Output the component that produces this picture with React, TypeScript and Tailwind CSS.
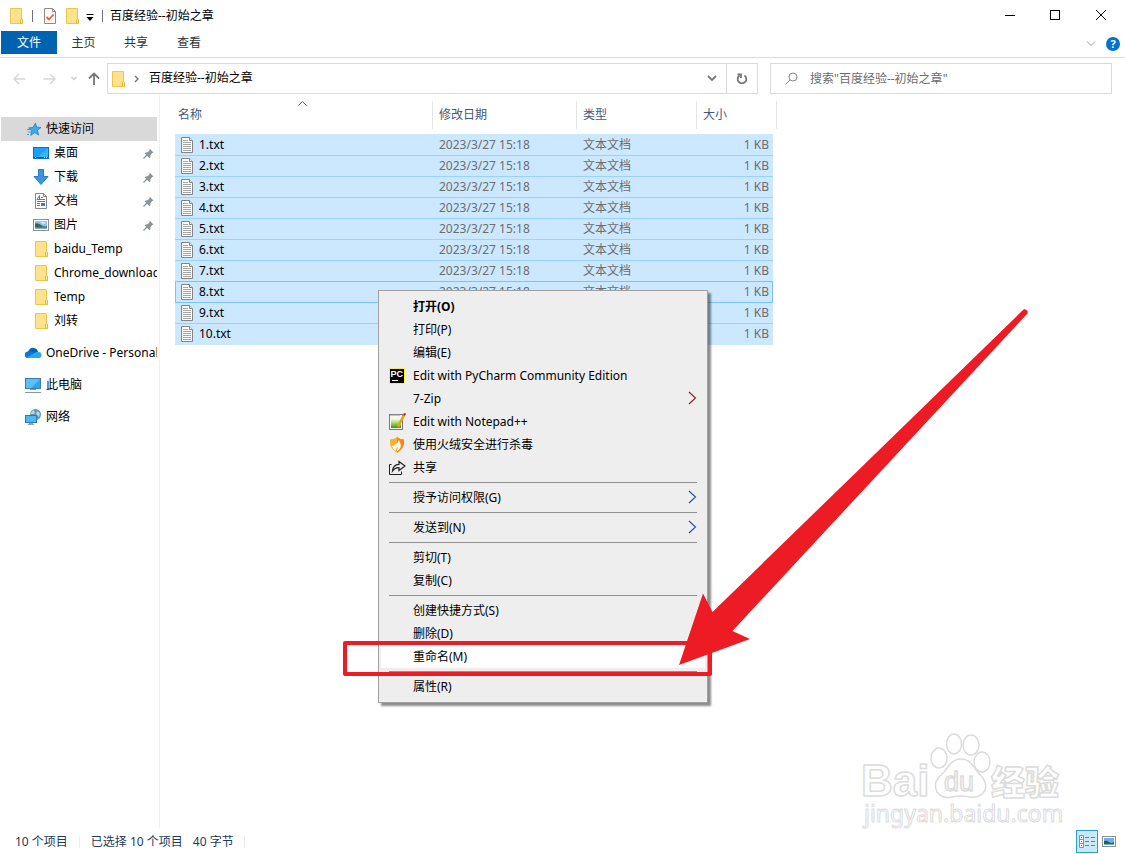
import React, { useState } from 'react';
import clsx from 'clsx';

const FolderIcon = () => (
  <svg width="16" height="16" viewBox="0 0 16 16">
    <path d="M2.5 0.5h11v15h-11z" fill="#ffe38c" stroke="#eec64d" />
    <path d="M12.5 15.5v-4q1-1.5 2 0v4z" fill="#ffe9a6" stroke="#e6b832" />
  </svg>
);

const TextFileIcon = () => (
  <svg width="16" height="16" viewBox="0 0 16 16">
    <path d="M2.5 0.5h8l3 3v12h-11z" fill="#fff" stroke="#848484" />
    <path d="M10.5 0.5v3h3" fill="#eee" stroke="#848484" />
    <path d="M4 3.5h5M4 5.5h8M4 7.5h8M4 9.5h8M4 11.5h8M4 13.5h8" stroke="#a6a6a6" />
  </svg>
);

const StarIcon = () => (
  <svg width="16" height="16" viewBox="0 0 16 16">
    <path d="M9.500 2l1 4 4.500 0.500-3.600 2.700 1.300 4.800-4-2.400-4 2.800 1.200-4.700-3.200-2.700 4.300-0.600z" fill="#3fa9ea" stroke="#1f83c9" strokeWidth="0.8" />
    <path d="M1 8.5h3M2 11h3M1 13.5h2" stroke="#3f9fdc" />
  </svg>
);

const DesktopIcon = () => (
  <svg width="16" height="16" viewBox="0 0 16 16">
    <rect x="0.5" y="2.5" width="15" height="11" fill="#1ba1f9" stroke="#0a70c4" />
    <path d="M15 3L5 12h10z" fill="#3db2ff" />
    <path d="M1 12.5h14" stroke="#0c5c9e" />
    <path d="M2 12.5h1M11 12.5h1M13 12.5h1" stroke="#fff" />
  </svg>
);

const DownloadIcon = () => (
  <svg width="16" height="16" viewBox="0 0 16 16">
    <path d="M5.5 0.5h5v7h4.5l-7 8-7-8h4.5z" fill="#3c93e0" stroke="#2a7bc8" />
  </svg>
);

const DocumentIcon = () => (
  <svg width="16" height="16" viewBox="0 0 16 16">
    <path d="M2.5 0.5h8l3 3v12h-11z" fill="#fff" stroke="#868686" />
    <path d="M10.5 0.5v3h3" fill="none" stroke="#868686" />
    <path d="M4 6.5l2.5-4v4M8 4.5h2M4 6.5h8M4 8.5h8M4 10.5h3M4 12.5h3" fill="none" stroke="#1d8fd8" />
    <rect x="8" y="10" width="4" height="3" fill="#3f7fa8" />
  </svg>
);

const PictureIcon = () => (
  <svg width="16" height="16" viewBox="0 0 16 16">
    <rect x="0.5" y="2.5" width="15" height="11" fill="#fff" stroke="#8f8f8f" />
    <rect x="2" y="4" width="12" height="8" fill="#8fc3ef" />
    <path d="M2 6.5q3-1 6 1.500t6 1v2.500h-12z" fill="#3b6459" />
    <path d="M2 10.500h12v1.500h-12z" fill="#7fa9bd" />
    <path d="M7 5q4-1 6 1l-3 1z" fill="#d7eafa" />
  </svg>
);

const OneDriveIcon = () => (
  <svg width="17" height="16" viewBox="0 0 17 16">
    <path d="M4 5a5 5 0 0 1 9 2l-5 4-6-3z" fill="#0364b8" />
    <path d="M3 13a3.3 3.3 0 0 1 0-6.600q3-0.800 5.5 1.200l5 5.400z" fill="#0f78d4" />
    <path d="M2 12.600l6.5-4q1.800-2 4.5-1.400a3 3 0 0 1 1.500 5.800h-11.500z" fill="#28a8ea" />
  </svg>
);

const ComputerIcon = () => (
  <svg width="16" height="16" viewBox="0 0 16 16">
    <rect x="0.5" y="1.5" width="15" height="10" fill="#5bc0f8" stroke="#3f7ca5" />
    <path d="M15 2l-9 9h9z" fill="#2fa4f1" />
    <path d="M5 12.5h6M0 15.5h16" stroke="#8196a6" />
  </svg>
);

const NetworkIcon = () => (
  <svg width="16" height="16" viewBox="0 0 16 16">
    <circle cx="10.5" cy="5.5" r="5.5" fill="#5f97b3" />
    <path d="M8 1q3 2 1 4l-4 0zM12 2l3 2-1 4-3-3z" fill="#b9d5df" />
    <rect x="0.5" y="6.5" width="11" height="7" fill="#4db8f5" stroke="#2f79a8" />
    <path d="M4 14.5h4M3 15.5h6" stroke="#8ba5b5" />
  </svg>
);

const PinIcon = () => (
  <svg width="11" height="11" viewBox="0 0 11 11">
    <path d="M6.5 0.500l4 4-1.200 0.500-1.800 2-0.200 2.300-1.100 0.700-4.500-4.500 0.800-1 2.300-0.200 1.700-2z" fill="#8a949b" />
    <path d="M4 7L0.500 10.500" stroke="#8a949b" strokeWidth="1.200" />
  </svg>
);

const PropertiesIcon = () => (
  <svg width="14" height="16" viewBox="0 0 14 16">
    <path d="M1.5 0.5h8l3 3v12h-11z" fill="#fafafa" stroke="#8b8b8b" />
    <path d="M9.5 0.5v3h3" fill="none" stroke="#8b8b8b" />
    <path d="M3.500 9l2.500 2.500 4.500-5" fill="none" stroke="#e8642a" strokeWidth="1.800" />
  </svg>
);

const PyCharmIcon = () => (
  <svg width="16" height="16" viewBox="0 0 16 16">
    <rect x="0.5" y="0.5" width="15" height="15" fill="#000" stroke="#f7f13c" />
    <text x="1.500" y="9" fill="#fff" fontSize="9" fontWeight="700" fontFamily="Liberation Sans">PC</text>
    <path d="M3 12.5h6" stroke="#fff" />
  </svg>
);

const NotepadIcon = () => (
  <svg width="17" height="17" viewBox="0 0 17 17">
    <defs>
      <linearGradient id="note" x1="0" y1="0" x2="0" y2="1">
        <stop offset="0.1" stopColor="#f4f6ea" />
        <stop offset="0.5" stopColor="#a8d95a" />
        <stop offset="1" stopColor="#2f9a14" />
      </linearGradient>
    </defs>
    <rect x="0.5" y="1.5" width="13" height="15" fill="#f8f8f8" stroke="#77797d" />
    <path d="M2 5h10v10h-10z" fill="url(#note)" />
    <path d="M2 1v2M4 1v2M6 1v2M8 1v2M10 1v2" stroke="#8d9199" />
    <path d="M15 2l-4.500 9-1.500 3" stroke="#e6a31d" strokeWidth="2.600" />
    <path d="M14 1l2-1 1 1-1.500 2z" fill="#a3151a" />
  </svg>
);

const HuorongIcon = () => (
  <svg width="16" height="16" viewBox="0 0 16 16">
    <path d="M1 2.500q4 0 7-2.500 3 2.500 7 2.500 1 9-7 13.500-8-4.500-7-13.500z" fill="#fbb02c" />
    <path d="M8 0q3 2.500 7 2.500 1 9-7 13.500z" fill="#f78a12" />
    <path d="M10 3q2.500 5 1.500 7.500-1 2.500-4 4 1.500-2 1-4.500-1.500 1-2 4-3-2-3.500-5 1.500 0 3-1.500 3-1.500 4-4.500z" fill="#fff8ec" />
  </svg>
);

const ShareIcon = () => (
  <svg width="17" height="16" viewBox="0 0 17 16" fill="none" stroke="#222">
    <path d="M2.500 4.5h-2v10h12v-3" />
    <path d="M10 1.5l6 4.5-6 4.5v-2.800q-4-0.200-6.500 3.300 0.500-6.500 6.500-6.700z" strokeWidth="1.200" />
  </svg>
);

const ChevronIcon = ({ color }: { color: string }) => (
  <svg className="mb-[2px]" width="9" height="14" viewBox="0 0 9 14" fill="none" stroke={color} strokeWidth="1.100">
    <path d="M1 1l6.5 6-6.500 6" />
  </svg>
);

const quickItems = [
  { label: '桌面', icon: DesktopIcon, pinned: true },
  { label: '下载', icon: DownloadIcon, pinned: true },
  { label: '文档', icon: DocumentIcon, pinned: true },
  { label: '图片', icon: PictureIcon, pinned: true },
  { label: 'baidu_Temp', icon: FolderIcon },
  { label: 'Chrome_download', icon: FolderIcon },
  { label: 'Temp', icon: FolderIcon },
  { label: '刘转', icon: FolderIcon },
];

const rootItems = [
  { label: 'OneDrive - Personal', icon: OneDriveIcon },
  { label: '此电脑', icon: ComputerIcon },
  { label: '网络', icon: NetworkIcon },
];

const files = ['1.txt', '2.txt', '3.txt', '4.txt', '5.txt', '6.txt', '7.txt', '8.txt', '9.txt', '10.txt'];

type MenuEntry = { label: string; icon?: React.ComponentType; arrow?: string; bold?: boolean; active?: boolean };

const menuGroups: MenuEntry[][] = [
  [
    { label: '打开(O)', bold: true },
    { label: '打印(P)' },
    { label: '编辑(E)' },
    { label: 'Edit with PyCharm Community Edition', icon: PyCharmIcon },
    { label: '7-Zip', arrow: '#8c1c24' },
    { label: 'Edit with Notepad++', icon: NotepadIcon },
    { label: '使用火绒安全进行杀毒', icon: HuorongIcon },
    { label: '共享', icon: ShareIcon },
  ],
  [{ label: '授予访问权限(G)', arrow: '#1f5590' }],
  [{ label: '发送到(N)', arrow: '#1f5590' }],
  [{ label: '剪切(T)' }, { label: '复制(C)' }],
  [{ label: '创建快捷方式(S)' }, { label: '删除(D)' }, { label: '重命名(M)', active: true }],
  [{ label: '属性(R)' }],
];

const TitleBar = () => (
  <header className="flex h-[31px] items-center justify-between">
    <div className="flex items-center pl-2">
      <FolderIcon />
      <span className="ml-2 h-3 w-px bg-gray-500" />
      <button className="ml-[10px]" aria-label="属性"><PropertiesIcon /></button>
      <button className="ml-[7px]" aria-label="新建文件夹"><FolderIcon /></button>
      <button className="ml-[6px] mt-1" aria-label="自定义快速访问工具栏">
        <svg width="8" height="7" viewBox="0 0 8 7"><path d="M0.5 0.5h7" stroke="#000" /><path d="M0.5 3h7l-3.500 4z" /></svg>
      </button>
      <span className="ml-2 h-3 w-px bg-gray-500" />
      <h1 className="ml-[7px]">百度经验--初始之章</h1>
    </div>
    <div className="flex h-[30px] self-start pr-px">
      <button className="flex w-[45px] items-center justify-center" aria-label="最小化">
        <svg width="10" height="10"><path d="M0 5.5h10" stroke="#000" /></svg>
      </button>
      <button className="flex w-[45px] items-center justify-center" aria-label="最大化">
        <svg width="10" height="10"><rect x="0.5" y="0.5" width="9" height="9" fill="none" stroke="#000" /></svg>
      </button>
      <button className="flex w-[47px] items-center justify-center" aria-label="关闭">
        <svg width="10" height="10"><path d="M0 0l10 10M10 0L0 10" stroke="#000" /></svg>
      </button>
    </div>
  </header>
);

const Ribbon = () => (
  <nav className="flex h-[27px] items-start justify-between border-b border-[#dadbdc]">
    <div className="flex h-[23px] pl-px text-[#333]">
      <button className="w-14 bg-[#0063b1] pt-px text-white">文件</button>
      <button className="w-[53px] pt-px">主页</button>
      <button className="w-[52px] pt-px">共享</button>
      <button className="w-[54px] pt-px">查看</button>
    </div>
    <div className="flex h-[26px] items-center gap-[10px] pr-[5px]">
      <button aria-label="展开功能区">
        <svg width="10" height="6" viewBox="0 0 10 6" fill="none" stroke="#999"><path d="M1 0.5l4 4 4-4" /></svg>
      </button>
      <button className="flex h-[14px] w-[14px] items-center justify-center rounded-full bg-[#0072d4] text-[11px] font-bold leading-[14px] text-white" aria-label="帮助">?</button>
    </div>
  </nav>
);

const AddressBar = () => (
  <div className="flex h-[37px] items-start pr-[13px] pt-[5px]">
    <div className="flex h-[31px] w-[107px] items-center pl-[13px]">
      <button className="w-[30px]" aria-label="后退">
        <svg width="13" height="12" viewBox="0 0 13 12" fill="none" stroke="#d8d8d8" strokeWidth="1.500"><path d="M12.5 6h-11M6 1L1 6l5 5" /></svg>
      </button>
      <button className="w-[28px]" aria-label="前进">
        <svg width="13" height="12" viewBox="0 0 13 12" fill="none" stroke="#d8d8d8" strokeWidth="1.500"><path d="M0.5 6h11M7 1l5 5-5 5" /></svg>
      </button>
      <button className="w-[17px]" aria-label="最近浏览的位置">
        <svg width="6" height="5" viewBox="0 0 6 5" fill="none" stroke="#c8c8c8" strokeWidth="1.300"><path d="M0.5 1L3 3.500 5.500 1" /></svg>
      </button>
      <button aria-label="上移">
        <svg width="12" height="13" viewBox="0 0 12 13" fill="none" stroke="#777" strokeWidth="1.800"><path d="M6 13v-11M1 6.500l5-5 5 5" /></svg>
      </button>
    </div>
    <div className="flex h-[31px] flex-1 items-center border border-[#d9d9d9] pl-[2px]">
      <FolderIcon />
      <svg className="ml-2" width="5" height="8" viewBox="0 0 5 8" fill="none" stroke="#777" strokeWidth="1.400"><path d="M1 1l3 3-3 3" /></svg>
      <button className="ml-[10px] flex-1 pb-px text-left">百度经验--初始之章</button>
      <button className="flex w-7 justify-center" aria-label="以前的位置">
        <svg width="10" height="7" viewBox="0 0 10 7" fill="none" stroke="#777" strokeWidth="1.800"><path d="M1 1l4 4 4-4" /></svg>
      </button>
      <button className="flex h-[29px] w-[31px] items-center justify-center border-l border-[#d9d9d9]" aria-label="刷新">
        <svg width="12" height="12" viewBox="0 0 12 12" fill="none" stroke="#777" strokeWidth="1.800"><path d="M8.500 2.500a4.300 4.300 0 1 1-5 0" /><path d="M1.500 1.500h3.500v3.500" /></svg>
      </button>
    </div>
    <label className="ml-3 flex h-[31px] w-[342px] items-center border border-[#d9d9d9] pl-[14px]">
      <svg width="13" height="13" viewBox="0 0 13 13" fill="none" stroke="#8a8a8a"><circle cx="8" cy="5" r="4" /><path d="M5 8l-4.500 4.500" /></svg>
      <input type="search" aria-label="搜索" placeholder='搜索"百度经验--初始之章"' className="ml-3 flex-1 outline-none placeholder:text-[#6d6d6d]" />
    </label>
  </div>
);

const Sidebar = () => (
  <aside className="w-40 shrink-0 border-r border-[#f0f0f0] pl-px pr-[2px] pt-[22px]">
    <a href="#" className="flex h-6 items-center gap-1 bg-[#d9d9d9] pl-[25px]">
      <StarIcon />
      快速访问
    </a>
    {quickItems.map(({ label, icon: Icon, pinned }) => (
      <a key={label} href="#" className="flex h-6 items-center gap-[5px] overflow-hidden whitespace-nowrap pl-8">
        <span className="shrink-0"><Icon /></span>
        <span className="flex-1">{label}</span>
        {pinned && <span className="pr-[3px]"><PinIcon /></span>}
      </a>
    ))}
    {rootItems.map(({ label, icon: Icon }) => (
      <a key={label} href="#" className="mt-2 flex h-6 items-center gap-1 overflow-hidden whitespace-nowrap pl-6">
        <span className="w-[17px] shrink-0"><Icon /></span>
        {label}
      </a>
    ))}
  </aside>
);

const headers = [
  { label: '名称', width: 'w-[258px] pl-[3px]' },
  { label: '修改日期', width: 'w-36 pl-[6px]' },
  { label: '类型', width: 'w-30 pl-[6px]' },
];

const FileTable = () => (
  <table className="w-[602px] table-fixed border-separate border-spacing-0">
    <thead>
      <tr className="h-[33px] text-left align-top text-[#44597a]">
        {headers.map(({ label, width }) => (
          <th key={label} className={clsx('relative p-0 font-normal', width)}>
            {label === '名称' && (
              <svg className="absolute left-[123px] top-0" width="9" height="5" viewBox="0 0 9 5" fill="none" stroke="#555"><path d="M0.5 4.5l4-4 4 4" /></svg>
            )}
            <div className="h-7 border-r border-[#e5e5e5] leading-7">{label}</div>
          </th>
        ))}
        <th className="w-[76px] p-0 pl-[6px] font-normal leading-7">大小</th>
        <th className="w-1 p-0"><div className="h-7 border-r border-[#e5e5e5]" /></th>
      </tr>
    </thead>
    <tbody>
      {files.map((name) => {
        const focused = name === '8.txt';
        const cell = clsx(
          'border-b bg-[#cce8ff] p-0 leading-5',
          name === '1.txt' && 'border-t border-t-[#cce8ff]',
          focused || name === '7.txt' ? 'border-b-[#7cc1f7]' : name === '10.txt' ? 'border-b-[#cce8ff]' : 'border-b-[#99d1ff]'
        );
        return (
          <tr key={name} className="text-[#6d6d6d]">
            <td className={clsx(cell, 'text-black', focused ? 'border-l border-l-[#7cc1f7] pl-[3px]' : 'pl-1')}>
              <div className="flex items-center gap-1"><TextFileIcon />{name}</div>
            </td>
            <td className={clsx(cell, 'pl-[6px]')}>2023/3/27 15:18</td>
            <td className={clsx(cell, 'pl-[6px]')}>文本文档</td>
            <td className={clsx(cell, 'text-right', focused ? 'border-r border-r-[#7cc1f7] pr-[3px]' : 'pr-1')}>1 KB</td>
            <td className="p-0" />
          </tr>
        );
      })}
    </tbody>
  </table>
);

const ContextMenu = () => (
  <div role="menu" className="absolute left-[378px] top-[290px] w-[330px] border border-[#a0a0a0] bg-[#eeeeee] px-[2px] py-1 shadow-[3px_3px_2px_rgba(0,0,0,0.45)]">
    {menuGroups.map((group, i) => (
      <React.Fragment key={i}>
        {i > 0 && <hr className="mx-2 my-[3px] border-[#919191]" />}
        {group.map(({ label, icon: Icon, arrow, bold, active }) => (
          <button
            key={label}
            role="menuitem"
            className={clsx('flex h-[23px] w-full items-center px-2', bold && 'font-bold', active && 'bg-white')}
          >
            <span className="flex w-6 shrink-0">{Icon && <Icon />}</span>
            <span className="flex-1 text-left">{label}</span>
            {arrow && <ChevronIcon color={arrow} />}
          </button>
        ))}
      </React.Fragment>
    ))}
  </div>
);

// Red frame round the rename entry and the arrow that points at it
const Annotation = () => (
  <svg className="pointer-events-none absolute left-0 top-0" width="1125" height="854" viewBox="0 0 1125 854">
    <rect x="345" y="643" width="365" height="31" fill="none" stroke="#ed1c24" strokeWidth="4" strokeLinejoin="round" />
    <path d="M679 665L703 593.5 712.5 612 1022.5 310.5a2.800 2.800 0 0 1 4.500 3.500L732.5 631 750 639z" fill="#ed1c24" />
  </svg>
);

const Watermark = () => (
  <svg className="pointer-events-none absolute bottom-[20px] right-[55px]" width="210" height="104" viewBox="0 0 210 104" fill="#fff" stroke="#dcdcdc" strokeWidth="1.500" strokeLinejoin="round">
    <text x="1" y="66" fontSize="44" fontFamily="Liberation Sans" fontWeight="700">Bai</text>
    <ellipse cx="79" cy="28" rx="8" ry="10" />
    <ellipse cx="94" cy="14" rx="7.500" ry="10" />
    <ellipse cx="111" cy="15" rx="8" ry="10" />
    <ellipse cx="122" cy="32" rx="8" ry="10" />
    <path d="M101 29q8 0 13 8 4 6 9 11 6 10-1 16-5 4-12 3-9-2-18 0-10 2-15-5-4-8 2-15 5-4 9-10 5-8 13-8z" />
    <text x="84" y="61" fontSize="27" fontFamily="Liberation Sans">du</text>
    <text x="131" y="65" fontSize="34" fontFamily="Noto Sans CJK SC" fontWeight="900">经验</text>
    <text x="4" y="92" fontSize="23" fontFamily="Noto Sans" strokeWidth="1">jingyan.baidu.com</text>
  </svg>
);

const StatusBar = ({ view, onView }: { view: string; onView: (v: string) => void }) => (
  <footer className="flex h-[26px] items-center justify-between pl-[15px] pr-[5px] text-[#1e395b]">
    <div className="flex items-center pt-px">
      <span>10 个项目</span>
      <span className="ml-[11px] mr-[11px] h-3 w-px bg-[#ececec]" />
      <span>已选择 10 个项目</span>
      <span className="ml-[10px]">40 字节</span>
      <span className="ml-[10px] h-3 w-px bg-[#ececec]" />
    </div>
    <div className="flex items-center">
      <button
        aria-label="详细信息"
        onClick={() => onView('details')}
        className={clsx('flex h-[23px] w-[22px] items-center justify-center border', view === 'details' ? 'border-[#26a0da] bg-[#cbe8f6]' : 'border-transparent')}
      >
        <svg width="16" height="13" viewBox="0 0 16 13" fill="none">
          <path d="M0.5 0.5h4v12h-4zM0.5 4.5h4M0.5 8.5h4" fill="#fff" stroke="#8f8f8f" />
          <path d="M2 2.5h1M2 6.5h1" stroke="#4a7ba6" />
          <path d="M2 10.5h1" stroke="#d22" />
          <path d="M6 2.5h4M12 2.5h4M6 6.5h4M12 6.5h4M6 10.5h4M12 10.5h4" stroke="#6f7f8a" />
        </svg>
      </button>
      <button
        aria-label="大图标"
        onClick={() => onView('icons')}
        className={clsx('flex h-[23px] w-[22px] items-center justify-center border', view === 'icons' ? 'border-[#26a0da] bg-[#cbe8f6]' : 'border-transparent')}
      >
        <svg width="14" height="11" viewBox="0 0 14 11">
          <rect x="0.5" y="0.5" width="13" height="10" fill="#fff" stroke="#8f8f8f" />
          <path d="M2 2h10v7h-10z" fill="#6fb0ec" />
          <path d="M2 5q3-1 5 1t5 0v2h-10z" fill="#35594f" />
        </svg>
      </button>
    </div>
  </footer>
);

export default function App() {
  const [view, setView] = useState('details');

  return (
    <div className="relative flex min-h-screen flex-col overflow-hidden bg-white font-['Noto_Sans','Noto_Sans_CJK_SC',sans-serif] text-[12px] leading-4 text-black">
      <TitleBar />
      <Ribbon />
      <AddressBar />
      <main className="flex flex-1">
        <Sidebar />
        <section className="flex-1 pl-[15px] pt-[6px]">
          <FileTable />
        </section>
      </main>
      <StatusBar view={view} onView={setView} />
      <ContextMenu />
      <Watermark />
      <Annotation />
    </div>
  );
}
